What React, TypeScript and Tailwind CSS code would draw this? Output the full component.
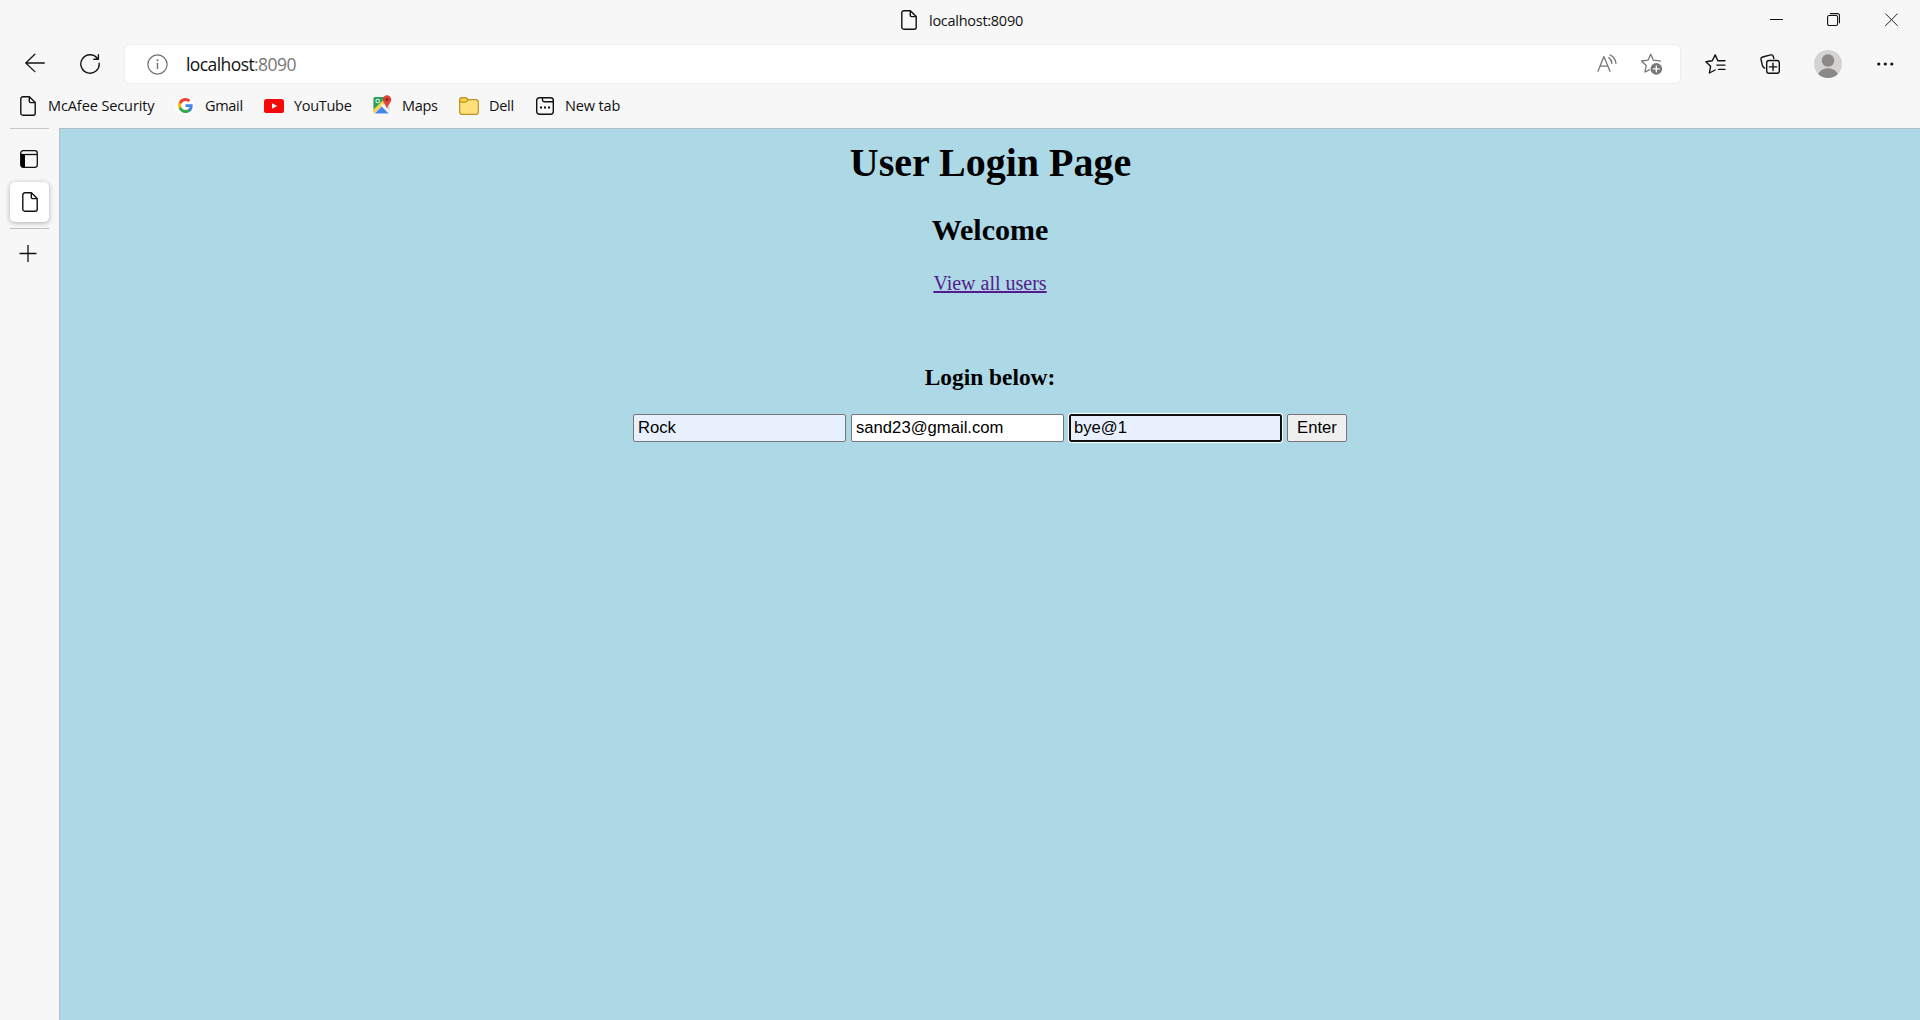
import type { ReactNode } from "react";

function Page({ className = "" }: { className?: string }) {
  return (
    <svg className={`block shrink-0 ${className}`} width="16" height="20" viewBox="0 0 16 20" fill="none" stroke="currentColor" strokeWidth="1.4" strokeLinejoin="round">
      <path d="M2.7 .8H9.4L15.2 6.6V17.2a2 2 0 0 1-2 2H2.8a2 2 0 0 1-2-2V2.8a2 2 0 0 1 2-2Z" />
      <path d="M9.3 1V5a1.6 1.6 0 0 0 1.6 1.6H15" />
    </svg>
  );
}

function BackIcon() {
  return (
    <svg className="ml-[25px] block shrink-0 -translate-y-px" width="20" height="20" viewBox="0 0 20 20" fill="none" stroke="#151515" strokeWidth="1.3" strokeLinecap="round" strokeLinejoin="round">
      <path d="M19.3 10H.9M9.8 1.3.8 10l9 8.6" />
    </svg>
  );
}

function ReloadIcon() {
  return (
    <svg className="ml-[35px] block shrink-0" width="20" height="20" viewBox="0 0 20 20" fill="none" stroke="#151515" strokeWidth="1.4" strokeLinecap="round" strokeLinejoin="round">
      <path d="M19.2 9.2A9.2 9.2 0 1 1 17.4 4.5M18.4.8V5.3H13.8" />
    </svg>
  );
}

function InfoIcon() {
  return (
    <svg className="ml-[22px] block shrink-0" width="21" height="21" viewBox="0 0 21 21" fill="none" stroke="#707070" strokeWidth="1.2">
      <circle cx="10.5" cy="10.5" r="9.6" />
      <path d="M10.5 9v6" strokeWidth="1.4" />
      <circle cx="10.5" cy="6.2" r="1" fill="#707070" stroke="none" />
    </svg>
  );
}

function ReadAloudIcon() {
  return (
    <svg className="ml-auto block shrink-0" width="20" height="20" viewBox="0 0 20 20" fill="none" stroke="#777" strokeWidth="1.3" strokeLinecap="round" strokeLinejoin="round">
      <path d="M1 17.2 6.9 2.6 13 17.2M3 12.2H11M11.8 3.6Q14.6 5.6 14.9 9.4M13.2.9Q18.3 3.6 19 9.4" />
    </svg>
  );
}

function AddFavoriteIcon() {
  return (
    <svg className="ml-[23px] mr-[17px] block shrink-0" width="23" height="22" viewBox="0 0 23 22" fill="none" stroke="#777" strokeWidth="1.3" strokeLinecap="round" strokeLinejoin="round">
      <path d="M20.2 8.3 19.8 7.8 13.4 7.2 10.7 1.3 8 7.2 1.5 8 6.2 12.5 5 19 9.4 16.8" />
      <circle cx="16.3" cy="15.9" r="5.8" fill="#777" stroke="none" />
      <path d="M16.3 13v5.8M13.4 15.9h5.8" stroke="#fff" />
    </svg>
  );
}

function FavoritesIcon() {
  return (
    <svg className="ml-[25px] block shrink-0" width="21" height="20" viewBox="0 0 21 20" fill="none" stroke="#111" strokeWidth="1.4" strokeLinecap="round" strokeLinejoin="round">
      <path d="M12.8 6.8 10.2.9 7.3 6.8.9 7.7 5.6 12.3 4.4 19 10.2 16M13.6 6.7H20M11.8 11.1H20M13.6 15.4H20" />
    </svg>
  );
}

function CollectionsIcon() {
  return (
    <svg className="ml-[34px] block shrink-0" width="20" height="20" viewBox="0 0 20 20" fill="none" stroke="#111" strokeWidth="1.4" strokeLinecap="round" strokeLinejoin="round">
      <rect x="6.7" y="6.5" width="12.6" height="12.8" rx="2.3" />
      <path d="M13 9.3v7.2M9.4 12.9h7.2M13.8 4.4 13.3 2.5Q12.8.5 10.7.9L2.6 3Q.6 3.5 1 5.5L2.5 11.8Q3 13.6 4.7 14.2" />
    </svg>
  );
}

function Avatar() {
  return (
    <svg className="ml-[34px] block shrink-0" width="28" height="28" viewBox="0 0 28 28">
      <defs>
        <clipPath id="avatar"><circle cx="14" cy="14" r="14" /></clipPath>
      </defs>
      <g clipPath="url(#avatar)">
        <path fill="#d5d3d1" d="M0 0h28v28H0z" />
        <circle cx="14" cy="10.5" r="6.2" fill="#8b8987" />
        <ellipse cx="14" cy="25.8" rx="10" ry="7.5" fill="#8b8987" />
      </g>
    </svg>
  );
}

function GoogleIcon() {
  return (
    <span className="flex size-[20px] items-center justify-center rounded-full bg-white">
      <svg width="15" height="15" viewBox="0 0 18 18">
        <path fill="#4285F4" d="M17.64 9.2c0-.64-.06-1.25-.16-1.84H9v3.48h4.84a4.14 4.14 0 0 1-1.8 2.72v2.26h2.92c1.7-1.57 2.68-3.88 2.68-6.62Z" />
        <path fill="#34A853" d="M9 18c2.43 0 4.47-.8 5.96-2.18l-2.91-2.26c-.81.54-1.84.86-3.05.86-2.34 0-4.33-1.58-5.04-3.71H.96v2.33A9 9 0 0 0 9 18Z" />
        <path fill="#FBBC05" d="M3.96 10.71A5.41 5.41 0 0 1 3.68 9c0-.6.1-1.17.28-1.71V4.96H.96A9 9 0 0 0 0 9c0 1.45.35 2.83.96 4.04l3-2.33Z" />
        <path fill="#EA4335" d="M9 3.58c1.32 0 2.5.45 3.44 1.35l2.58-2.59A8.65 8.65 0 0 0 9 0 9 9 0 0 0 .96 4.96l3 2.33C4.67 5.16 6.66 3.58 9 3.58Z" />
      </svg>
    </span>
  );
}

function YouTubeIcon() {
  return (
    <svg width="20" height="14" viewBox="0 0 20 14">
      <rect width="20" height="14" rx="2.6" fill="#f50909" />
      <path d="M8 4.2 13.2 7 8 9.8Z" fill="#fff" />
    </svg>
  );
}

function MapsIcon() {
  return (
    <svg className="-translate-y-px" width="19" height="19" viewBox="0 0 19 19">
      <defs>
        <clipPath id="mapSheet"><rect x=".5" y="2" width="16.5" height="16.5" rx="1.5" /></clipPath>
      </defs>
      <g clipPath="url(#mapSheet)">
        <path fill="#dce1e3" d="M0 2h18v17H0z" />
        <path fill="#28a05b" d="M0 2h13L0 16Z" />
        <path fill="#fbd24f" d="M0 15 12 3.5l2.4 2.3L1.5 18.5H0Z" />
        <path fill="#fff" d="m9.2 8.7 8.8 9-1.2 1.3L7.9 10Z" />
        <path fill="#4285f4" d="m8.7 11.7 7.2 7H1.7Z" />
      </g>
      <circle cx="4.7" cy="6" r="1.8" fill="none" stroke="#d7f1df" strokeWidth="1.1" />
      <path fill="#db4437" d="M14 .2a4.3 4.3 0 0 1 4.3 4.3c0 3.1-3.1 4.4-3.8 8.3h-1C12.8 8.9 9.7 7.6 9.7 4.5A4.3 4.3 0 0 1 14 .2Z" />
      <circle cx="14" cy="4.5" r="1.5" fill="#812a21" />
    </svg>
  );
}

function FolderIcon() {
  return (
    <svg width="20" height="18" viewBox="0 0 20 18" fill="#ffe07c" stroke="#bd921c" strokeWidth="1.2" strokeLinejoin="round">
      <path d="M.7 3A2.3 2.3 0 0 1 3 .7H6.5Q7.3.7 7.9 1.3L9.2 2.7H17a2.3 2.3 0 0 1 2.3 2.3V15A2.3 2.3 0 0 1 17 17.3H3A2.3 2.3 0 0 1 .7 15Z" />
      <path fill="#f9cf4a" d="M.7 3A2.3 2.3 0 0 1 3 .7H6.5Q7.3.7 7.9 1.3L9.2 2.7 7.7 4.6Q7.2 5.2 6.3 5.2H.7Z" />
    </svg>
  );
}

function NewTabIcon() {
  return (
    <svg width="18" height="18" viewBox="0 0 18 18" fill="none" stroke="#111" strokeWidth="1.4">
      <rect x=".7" y=".7" width="16.6" height="16.6" rx="2.7" />
      <path d="M6.5 1V3A1.7 1.7 0 0 0 8.2 4.7H17" />
      <path d="M4 10.5h2M8 10.5h2M12 10.5h2" strokeWidth="2" />
    </svg>
  );
}

function Bookmark({ icon, label, gap, text }: { icon: ReactNode; label: string; gap: string; text: string }) {
  return (
    <div className={`flex h-[24px] items-center ${gap}`}>
      <span className="flex w-[20px] shrink-0 justify-center">{icon}</span>
      <span className={`ml-[10px] whitespace-nowrap ${text}`}>{label}</span>
    </div>
  );
}

const field = "h-[28px] w-[213px] rounded-[2px] border px-[4px] text-[16.667px] leading-none text-black outline-none";

export default function App() {
  return (
    <div className="flex h-[1020px] w-[1920px] flex-col overflow-hidden bg-[#f7f7f7] font-['Open_Sans',sans-serif] text-[#111]">
      <header className="h-[128px] shrink-0">
        <div className="flex h-[45px] items-start">
          <Page className="ml-[901px] mt-[10px]" />
          <span className="ml-[12px] mt-[11px] w-[94px] whitespace-nowrap text-[14.5px] leading-[20px] tracking-[-0.27px]">localhost:8090</span>
          <div className="ml-auto mr-[22px] mt-[13px] flex">
            <svg width="13" height="14" viewBox="0 0 13 14"><path d="M0 6.5h13" stroke="#111" /></svg>
            <svg className="ml-[44px]" width="13" height="14" viewBox="0 0 13 14" fill="none" stroke="#111" strokeWidth="1.1">
              <rect x=".6" y="2.5" width="10" height="10" rx="1.6" />
              <path d="M3 .6h7.500a2 2 0 0 1 2 2v7.600" />
            </svg>
            <svg className="ml-[45px]" width="13" height="14" viewBox="0 0 13 14" stroke="#222"><path d="m.3.5 12.400 12.400M12.700.5.3 12.900" /></svg>
          </div>
        </div>
        <div className="flex h-[38px] items-center">
          <BackIcon />
          <ReloadIcon />
          <div className="ml-[25px] flex h-[38px] w-[1555px] items-center rounded-[5px] bg-white shadow-[0_0_3px_rgba(0,0,0,0.09)]">
            <InfoIcon />
            <span className="mb-px ml-[18px] whitespace-nowrap text-[17.5px] leading-[24px] tracking-[-0.58px]">
              localhost<span className="text-[#777]">:8090</span>
            </span>
            <ReadAloudIcon />
            <AddFavoriteIcon />
          </div>
          <FavoritesIcon />
          <CollectionsIcon />
          <Avatar />
          <svg className="ml-[35px] block shrink-0" width="17" height="4" viewBox="0 0 17 4" fill="#111">
            <circle cx="1.8" cy="2" r="1.6" /><circle cx="8.3" cy="2" r="1.6" /><circle cx="14.8" cy="2" r="1.6" />
          </svg>
        </div>
        <nav className="flex h-[45px] items-center text-[14.5px] leading-[20px] tracking-[-0.3px]">
          <Bookmark icon={<Page />} label="McAfee Security" gap="ml-[18px]" text="w-[107px] tracking-[-0.1px]" />
          <Bookmark icon={<GoogleIcon />} label="Gmail" gap="ml-[20px]" text="w-[38px]" />
          <Bookmark icon={<YouTubeIcon />} label="YouTube" gap="ml-[21px]" text="w-[57px]" />
          <Bookmark icon={<MapsIcon />} label="Maps" gap="ml-[21px]" text="w-[36px]" />
          <Bookmark icon={<FolderIcon />} label="Dell" gap="ml-[21px]" text="w-[25px]" />
          <Bookmark icon={<NewTabIcon />} label="New tab" gap="ml-[21px]" text="w-[55px] tracking-[-0.15px]" />
        </nav>
      </header>
      <div className="flex min-h-0 flex-1">
        <aside className="w-[59px] shrink-0">
          <div className="ml-[10px] h-px w-[39px] bg-[#c8c8c8]" />
          <svg className="ml-[20px] mt-[21px] block" width="18" height="18" viewBox="0 0 18 18" fill="none" stroke="#111" strokeWidth="1.3">
            <rect x=".7" y=".7" width="16.6" height="16.6" rx="2.5" />
            <path d="M1 4.5h16" />
            <path d="M1 4h4v13.200H3a2 2 0 0 1-2-2Z" fill="#000" stroke="none" />
          </svg>
          <div className="ml-[10px] mt-[14px] flex h-[40px] w-[39px] items-center justify-center rounded-[5px] bg-white pl-px shadow-[0_1px_5px_rgba(0,0,0,0.3)]">
            <Page />
          </div>
          <div className="ml-[10px] mt-[6px] h-px w-[39px] bg-[#bfbfbf]" />
          <svg className="ml-[19px] mt-[16px] block" width="18" height="18" viewBox="0 0 18 18" stroke="#111" strokeWidth="1.3"><path d="M.5 8.5h17M9 0v17" /></svg>
        </aside>
        <main className="flex flex-1 flex-col items-center border-l border-t border-[#b3bdc2] bg-[#add8e6] font-['Liberation_Serif',serif] text-black">
          <h1 className="mt-[11px] pl-px text-[40px] font-bold leading-[46px]">User Login Page</h1>
          <h2 className="mt-[27px] text-[30px] font-bold leading-[34px]">Welcome</h2>
          <a className="mt-[25px] text-[20px] leading-[23px] text-[#551a8b] underline" href="#users">View all users</a>
          <h3 className="mt-[69px] text-[23.4px] font-bold leading-[27px]">Login below:</h3>
          <form className="mt-[23px] flex gap-[5px] font-['Liberation_Sans',sans-serif]">
            <input className={`${field} border-[#767676] bg-[#e8f0fe]`} defaultValue="Rock" />
            <input className={`${field} border-[#767676] bg-white`} defaultValue="sand23@gmail.com" />
            <input className={`${field} border-[#101010] bg-[#e8f0fe] shadow-[inset_0_0_0_1px_#101010,0_0_0_1px_#fff]`} defaultValue="bye@1" />
            <button type="button" className="h-[28px] w-[60px] rounded-[2px] border border-[#767676] bg-[#efefef] text-[16.667px] leading-none">Enter</button>
          </form>
        </main>
      </div>
    </div>
  );
}
